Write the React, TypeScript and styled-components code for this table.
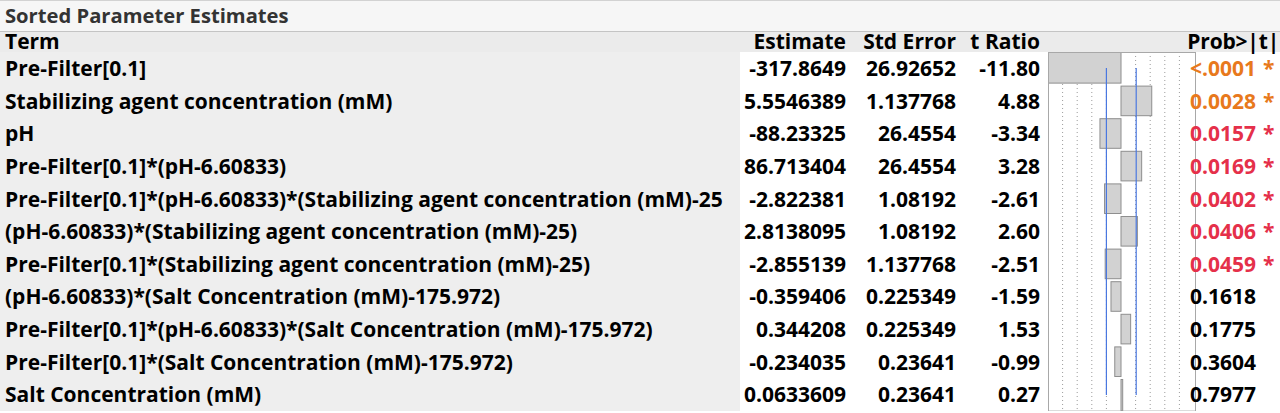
import React from "react";
import styled, { createGlobalStyle } from "styled-components";

const Global = createGlobalStyle`
  html, body { margin: 0; padding: 0; background: #ffffff; }
  body { font-family: "Open Sans", "Noto Sans", sans-serif; }
`;

type Sig = "none" | "orange" | "red";
type Row = { term: string; est: string; se: string; t: number; tr: string; p: string; sig: Sig };

const rows: Row[] = [
  { term: "Pre-Filter[0.1]", est: "-317.8649", se: "26.92652", t: -11.8, tr: "-11.80", p: "<.0001", sig: "orange" },
  { term: "Stabilizing agent concentration (mM)", est: "5.5546389", se: "1.137768", t: 4.88, tr: "4.88", p: "0.0028", sig: "orange" },
  { term: "pH", est: "-88.23325", se: "26.4554", t: -3.34, tr: "-3.34", p: "0.0157", sig: "red" },
  { term: "Pre-Filter[0.1]*(pH-6.60833)", est: "86.713404", se: "26.4554", t: 3.28, tr: "3.28", p: "0.0169", sig: "red" },
  { term: "Pre-Filter[0.1]*(pH-6.60833)*(Stabilizing agent concentration (mM)-25", est: "-2.822381", se: "1.08192", t: -2.61, tr: "-2.61", p: "0.0402", sig: "red" },
  { term: "(pH-6.60833)*(Stabilizing agent concentration (mM)-25)", est: "2.8138095", se: "1.08192", t: 2.6, tr: "2.60", p: "0.0406", sig: "red" },
  { term: "Pre-Filter[0.1]*(Stabilizing agent concentration (mM)-25)", est: "-2.855139", se: "1.137768", t: -2.51, tr: "-2.51", p: "0.0459", sig: "red" },
  { term: "(pH-6.60833)*(Salt Concentration (mM)-175.972)", est: "-0.359406", se: "0.225349", t: -1.59, tr: "-1.59", p: "0.1618", sig: "none" },
  { term: "Pre-Filter[0.1]*(pH-6.60833)*(Salt Concentration (mM)-175.972)", est: "0.344208", se: "0.225349", t: 1.53, tr: "1.53", p: "0.1775", sig: "none" },
  { term: "Pre-Filter[0.1]*(Salt Concentration (mM)-175.972)", est: "-0.234035", se: "0.23641", t: -0.99, tr: "-0.99", p: "0.3604", sig: "none" },
  { term: "Salt Concentration (mM)", est: "0.0633609", se: "0.23641", t: 0.27, tr: "0.27", p: "0.7977", sig: "none" },
];

const ROW_H = 32.6;
const CHART_W = 148;
const ZERO = 73;
const SCALE = 6.3;
const GRID = 14.6;
const FONT = "21px";

const Page = styled.div`
  width: 1280px;
  overflow: hidden;
`;

const TitleBar = styled.div`
  height: 30px;
  border-top: 1px solid #d2d2d2;
  border-bottom: 1px solid #c4c4c4;
  background: #f6f6f6;
  color: #333333;
  font-weight: 700;
  font-size: 20.2px;
  line-height: 29px;
  padding-left: 5px;
  white-space: nowrap;
  overflow: hidden;
`;

const Table = styled.div`
  display: grid;
  grid-template-columns: 740px 110px 110px 84px 4px 142px 90px;
  grid-template-rows: 20px repeat(${rows.length}, ${ROW_H}px);
  font-weight: 700;
  font-size: ${FONT};
  color: #000;
`;

const HeadCell = styled.div<{ $align?: "left" | "right" }>`
  background: #ebebeb;
  line-height: 19px;
  white-space: nowrap;
  text-align: ${(p) => p.$align ?? "right"};
  padding: ${(p) => (p.$align === "left" ? "0 0 0 5px" : "0 4px 0 0")};
`;

const ProbHead = styled.div`
  background: #ebebeb;
  line-height: 19px;
  white-space: nowrap;
  display: flex;
  justify-content: flex-end;
  padding-right: 1px;
  letter-spacing: -0.2px;
  position: relative;
  z-index: 1;
`;

const TermCell = styled.div`
  background: #eeeeee;
  display: flex;
  align-items: center;
  padding-left: 5px;
  white-space: nowrap;
  overflow: hidden;
`;

const NumCell = styled.div`
  display: flex;
  align-items: center;
  justify-content: flex-end;
  padding-right: 4px;
  white-space: nowrap;
`;

const ProbCell = styled.div<{ $sig: Sig }>`
  display: flex;
  align-items: center;
  white-space: nowrap;
  position: relative;
  z-index: 1;
  color: ${(p) => (p.$sig === "orange" ? "#e8791c" : p.$sig === "red" ? "#e5304a" : "#000000")};
`;

const Star = styled.span`
  margin-left: 7px;
`;

const ChartCell = styled.div`
  grid-column: 6;
  grid-row: 2 / span ${rows.length};
  width: ${CHART_W}px;
`;

const ChartSvg = styled.svg`
  display: block;
`;

function Chart() {
  const h = rows.length * ROW_H;
  const gridXs: number[] = [];
  for (let k = 1; k <= 4; k++) {
    gridXs.push(ZERO - GRID * k, ZERO + GRID * k);
  }
  return (
    <ChartSvg width={CHART_W} height={h + 1} viewBox={`0 0 ${CHART_W} ${h + 1}`}>
      {gridXs.map((x) => (
        <line key={x} x1={x} x2={x} y1={0} y2={h} stroke="#9a9a9a" strokeWidth={1} strokeDasharray="1 3" />
      ))}
      {rows.map((r, i) => {
        const w = r.t * SCALE;
        const x0 = Math.max(0.5, Math.min(ZERO, ZERO + w));
        const x1 = Math.max(ZERO, ZERO + w);
        const top = i === 0 ? 0.5 : i * ROW_H + 1.5;
        const bottom = i === rows.length - 1 ? h : (i + 1) * ROW_H - 1.5;
        return (
          <rect key={i} x={x0} y={top} width={x1 - x0} height={bottom - top} fill="#d2d2d2" stroke="#8e8e8e" strokeWidth={1} />
        );
      })}
      <line x1={ZERO - GRID} x2={ZERO - GRID} y1={16} y2={343} stroke="#4a78e0" strokeWidth={1.2} />
      <line x1={ZERO + GRID + 0.6} x2={ZERO + GRID + 0.6} y1={16} y2={343} stroke="#4a78e0" strokeWidth={1.2} />
      <rect x={0.5} y={0.5} width={CHART_W - 1} height={h} fill="none" stroke="#a8a8a8" strokeWidth={1} />
    </ChartSvg>
  );
}

export default function App() {
  return (
    <Page>
      <Global />
      <TitleBar>Sorted Parameter Estimates</TitleBar>
      <Table>
        <HeadCell $align="left">Term</HeadCell>
        <HeadCell>Estimate</HeadCell>
        <HeadCell>Std Error</HeadCell>
        <HeadCell>t Ratio</HeadCell>
        <HeadCell />
        <HeadCell />
        <ProbHead>Prob&gt;|t|</ProbHead>
        {rows.map((r, i) => (
          <React.Fragment key={i}>
            <TermCell style={{ gridRow: i + 2, gridColumn: 1 }}>{r.term}</TermCell>
            <NumCell style={{ gridRow: i + 2, gridColumn: 2 }}>{r.est}</NumCell>
            <NumCell style={{ gridRow: i + 2, gridColumn: 3 }}>{r.se}</NumCell>
            <NumCell style={{ gridRow: i + 2, gridColumn: 4 }}>{r.tr}</NumCell>
            <ProbCell $sig={r.sig} style={{ gridRow: i + 2, gridColumn: 7 }}>
              {r.p}
              {r.sig !== "none" && <Star>*</Star>}
            </ProbCell>
          </React.Fragment>
        ))}
        <ChartCell>
          <Chart />
        </ChartCell>
      </Table>
    </Page>
  );
}
